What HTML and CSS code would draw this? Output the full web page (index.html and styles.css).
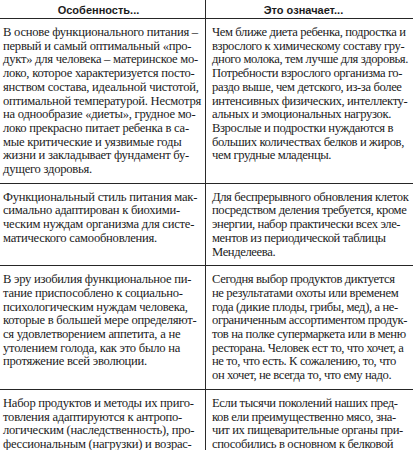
FILE: index.html
```html
<!DOCTYPE html>
<html lang="ru">
<head>
<meta charset="utf-8">
<title>Таблица</title>
<link rel="stylesheet" href="styles.css">
</head>
<body>
<div class="table">
  <div class="cell head left">Особенность...</div>
  <div class="cell head right">Это означает...</div>

  <div class="cell left">В основе функционального питания –<br>первый и самый оптимальный «про-<br>дукт» для человека – материнское мо-<br>локо, которое характеризуется посто-<br>янством состава, идеальной чистотой,<br>оптимальной температурой. Несмотря<br>на однообразие «диеты», грудное мо-<br>локо прекрасно питает ребенка в са-<br>мые критические и уязвимые годы<br>жизни и закладывает фундамент бу-<br>дущего здоровья.</div>
  <div class="cell right">Чем ближе диета ребенка, подростка и<br>взрослого к химическому составу гру-<br>дного молока, тем лучше для здоровья.<br>Потребности взрослого организма го-<br>раздо выше, чем детского, из-за более<br>интенсивных физических, интеллекту-<br>альных и эмоциональных нагрузок.<br>Взрослые и подростки нуждаются в<br>больших количествах белков и жиров,<br>чем грудные младенцы.</div>

  <div class="cell left">Функциональный стиль питания мак-<br>симально адаптирован к биохими-<br>ческим нуждам организма для систе-<br>матического самообновления.</div>
  <div class="cell right">Для беспрерывного обновления клеток<br>посредством деления требуется, кроме<br>энергии, набор практически всех эле-<br>ментов из периодической таблицы<br>Менделеева.</div>

  <div class="cell left">В эру изобилия функциональное пи-<br>тание приспособлено к социально-<br>психологическим нуждам человека,<br>которые в большей мере определяют-<br>ся удовлетворением аппетита, а не<br>утолением голода, как это было на<br>протяжение всей эволюции.</div>
  <div class="cell right">Сегодня выбор продуктов диктуется<br>не результатами охоты или временем<br>года (дикие плоды, грибы, мед), а не-<br>ограниченным ассортиментом продук-<br>тов на полке супермаркета или в меню<br>ресторана. Человек ест то, что хочет, а<br>не то, что есть. К сожалению, то, что<br>он хочет, не всегда то, что ему надо.</div>

  <div class="cell left last">Набор продуктов и методы их приго-<br>товления адаптируются к антропо-<br>логическим (наследственность), про-<br>фессиональным (нагрузки) и возрас-</div>
  <div class="cell right last">Если тысячи поколений наших пред-<br>ков ели преимущественно мясо, зна-<br>чит их пищеварительные органы при-<br>способились в основном к белковой</div>
</div>
</body>
</html>
```

FILE: styles.css
```css
html, body {
  margin: 0;
  padding: 0;
  background: #ffffff;
}

body {
  width: 413px;
  height: 450px;
  overflow: hidden;
  color: #1c1c1c;
  font-family: "Liberation Serif", "Times New Roman", serif;
  font-size: 12.6px;
  letter-spacing: -0.25px;
  line-height: 13.7px;
}

.table {
  display: grid;
  grid-template-columns: 205px 1fr;
}

.cell {
  padding: 7px 0 6px 0;
  border-bottom: 1.5px solid #262626;
  white-space: nowrap;
}

.left {
  padding-left: 3px;
}

.right {
  border-left: 1.2px solid #2a2a2a;
  padding-left: 6px;
  letter-spacing: -0.38px;
}

.head {
  font-family: "Liberation Sans", Arial, sans-serif;
  font-weight: bold;
  font-size: 11px;
  letter-spacing: 0;
  line-height: 12px;
  padding-top: 4px;
  padding-bottom: 2px;
  text-align: center;
}

.head.left {
  padding-left: 0;
  padding-right: 8px;
}

.head.right {
  padding-left: 0;
  padding-right: 12px;
}

.last {
  border-bottom: none;
}
```
